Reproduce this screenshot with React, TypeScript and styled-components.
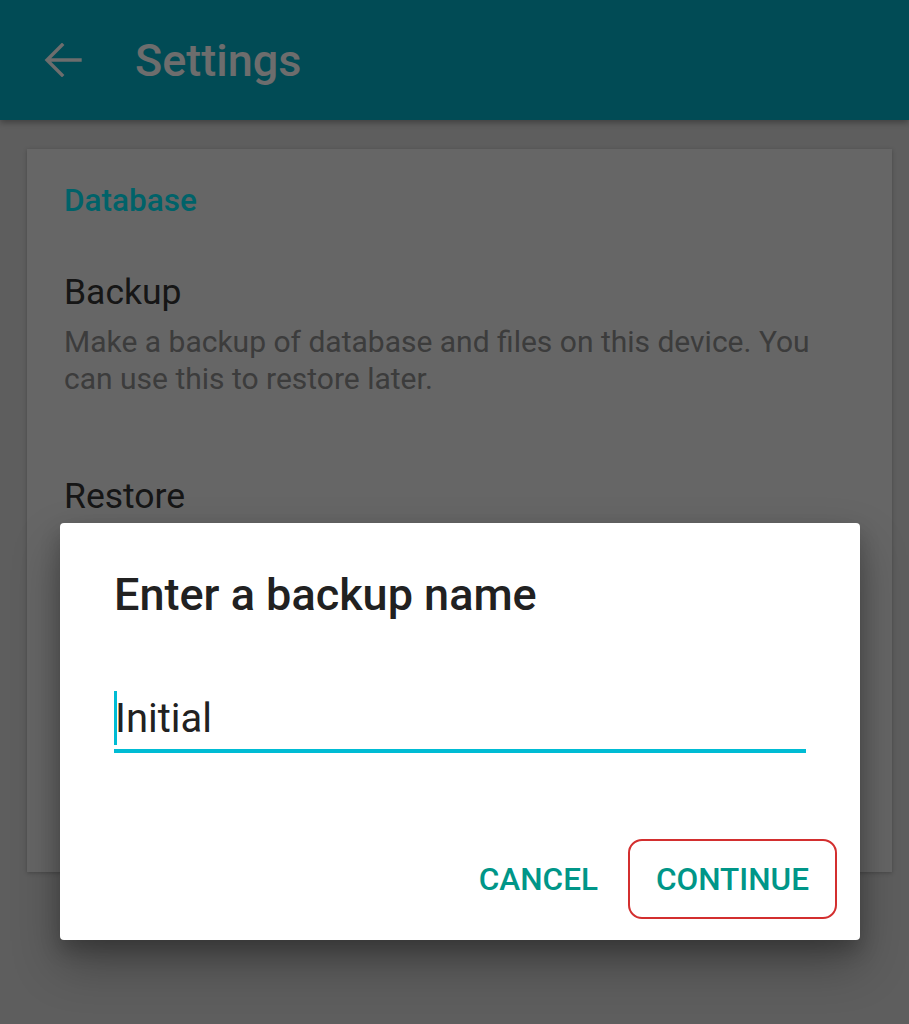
import styled, { createGlobalStyle } from "styled-components";

const GlobalStyle = createGlobalStyle`
  html, body {
    margin: 0;
    padding: 0;
    background: #bcbcbc;
    font-family: Roboto, "Noto Sans", "Liberation Sans", sans-serif;
  }
`;

const BackIcon = () => (
  <svg width="38" height="34" viewBox="0 0 38 34" fill="none">
    <path
      d="M36 17H4M18 2L3 17l15 15"
      stroke="currentColor"
      strokeWidth="3.4"
      strokeLinecap="square"
    />
  </svg>
);

const App = () => {
  return (
    <Screen>
      <GlobalStyle />
      <AppBar>
        <BackButton>
          <BackIcon />
        </BackButton>
        <Title>Settings</Title>
      </AppBar>

      <Content>
        <Card>
          <SectionLabel>Database</SectionLabel>
          <Preference>
            <PrefTitle>Backup</PrefTitle>
            <PrefSummary>
              Make a backup of database and files on this device. You can use
              this to restore later.
            </PrefSummary>
          </Preference>
          <Preference $gap={79}>
            <PrefTitle>Restore</PrefTitle>
            <PrefSummary>Restore a backup made on this device.</PrefSummary>
          </Preference>
        </Card>
      </Content>

      <Scrim>
        <Dialog>
          <DialogTitle>Enter a backup name</DialogTitle>
          <Field>
            <FieldValue>Initial</FieldValue>
          </Field>
          <Actions>
            <TextButton>Cancel</TextButton>
            <TextButton $outlined>Continue</TextButton>
          </Actions>
        </Dialog>
      </Scrim>
    </Screen>
  );
};

const Screen = styled.div`
  position: relative;
  width: 909px;
  height: 1024px;
  overflow: hidden;
  background: #bcbcbc;
`;

const AppBar = styled.header`
  height: 120px;
  background: #0297ab;
  display: flex;
  align-items: center;
  padding-left: 44px;
  box-shadow: 0 3px 6px rgba(0, 0, 0, 0.3);
  color: #dadada;
  position: relative;
  z-index: 1;
`;

const BackButton = styled.div`
  display: flex;
  width: 38px;
  margin-top: -1px;
`;

const Title = styled.h1`
  margin: 0 0 0 53px;
  font-size: 45px;
  font-weight: 500;
  letter-spacing: 0;
  line-height: 1;
`;

const Content = styled.main`
  padding: 29px 17px 0 27px;
`;

const Card = styled.section`
  min-height: 723px;
  box-sizing: border-box;
  background: #cccccc;
  padding: 34px 37px 0 37px;
  box-shadow: 0 1px 4px rgba(0, 0, 0, 0.25);
`;

const SectionLabel = styled.div`
  font-size: 31.5px;
  font-weight: 500;
  line-height: 35px;
  color: #00c4d2;
`;

const Preference = styled.div<{ $gap?: number }>`
  margin-top: ${(p) => p.$gap ?? 54}px;
`;

const PrefTitle = styled.div`
  font-size: 35.5px;
  line-height: 41px;
  color: #2c2c2c;
`;

const PrefSummary = styled.div`
  margin-top: 10px;
  font-size: 30px;
  line-height: 37px;
  color: #787878;
`;

const Scrim = styled.div`
  position: absolute;
  inset: 0;
  background: rgba(0, 0, 0, 0.5);
  z-index: 2;
  padding: 523px 0 0 60px;
  box-sizing: border-box;
`;

const Dialog = styled.div`
  width: 800px;
  height: 417px;
  box-sizing: border-box;
  background: #ffffff;
  border-radius: 4px;
  padding: 45px 23px 21px 54px;
  display: flex;
  flex-direction: column;
  box-shadow: 0 24px 48px rgba(0, 0, 0, 0.3), 0 10px 20px rgba(0, 0, 0, 0.2);
`;

const DialogTitle = styled.h2`
  margin: 0;
  font-size: 45px;
  line-height: 53px;
  font-weight: 500;
  color: #212121;
`;

const Field = styled.div`
  position: relative;
  margin: 73px 31px 0 0;
  padding-bottom: 6px;
  border-bottom: 4px solid #00bcd4;

  &::before {
    content: "";
    position: absolute;
    left: 0;
    top: -3px;
    width: 3px;
    height: 54px;
    background: #00bcd4;
  }
`;

const FieldValue = styled.div`
  font-size: 40px;
  line-height: 49px;
  color: #212121;
  padding-left: 1px;
`;

const Actions = styled.div`
  margin-top: auto;
  display: flex;
  justify-content: flex-end;
  gap: 2px;
`;

const TextButton = styled.button<{ $outlined?: boolean }>`
  height: 80px;
  padding: 0 26px;
  box-sizing: border-box;
  background: transparent;
  border: 2px solid ${(p) => (p.$outlined ? "#d32f2f" : "transparent")};
  border-radius: 14px;
  font-family: Roboto, "Noto Sans", "Liberation Sans", sans-serif;
  font-size: 31.5px;
  font-weight: 500;
  text-transform: uppercase;
  color: #009688;
  cursor: pointer;
`;

export default App;
